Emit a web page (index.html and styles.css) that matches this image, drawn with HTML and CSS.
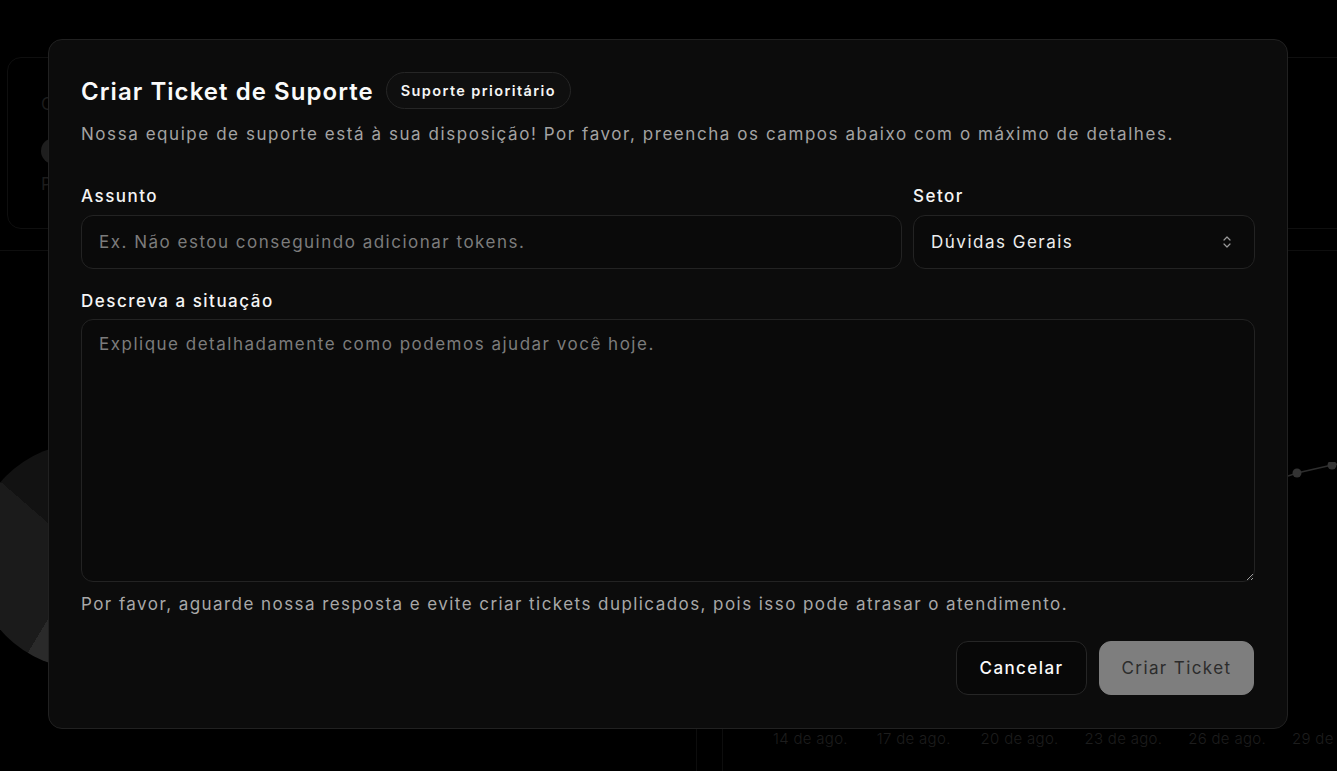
FILE: index.html
```html
<!DOCTYPE html>
<html lang="pt-BR">
<head>
<meta charset="utf-8">
<title>Criar Ticket de Suporte</title>
<link rel="stylesheet" href="styles.css">
</head>
<body>
<div class="dashboard">
  <div class="cards-row">
    <div class="stat-card">
      <div class="stat-title">C</div>
      <div class="stat-avatar"></div>
      <div class="stat-foot">P</div>
    </div>
    <div class="stat-card wide"></div>
  </div>
  <div class="separator"></div>
  <div class="charts-row">
    <div class="pie-card">
      <div class="pie"></div>
    </div>
    <div class="line-card">
      <svg class="line-svg" width="60" height="30" viewBox="0 0 60 30">
        <polyline points="0,14 9,11 44,3 60,0" fill="none" stroke="#2e2e2e" stroke-width="1.5"/>
        <circle cx="9" cy="11" r="4.5" fill="#333"/>
        <circle cx="44" cy="3" r="4.5" fill="#333"/>
      </svg>
      <div class="axis">
        <span>14 de ago.</span><span>17 de ago.</span><span>20 de ago.</span><span>23 de ago.</span><span>26 de ago.</span><span>29 de ago.</span>
      </div>
    </div>
  </div>
</div>

<div class="modal">
  <div class="modal-head">
    <h2 class="modal-title">Criar Ticket de Suporte</h2>
    <span class="badge">Suporte prioritário</span>
  </div>
  <p class="modal-desc">Nossa equipe de suporte está à sua disposição! Por favor, preencha os campos abaixo com o máximo de detalhes.</p>

  <div class="field-row">
    <div class="field grow">
      <label class="label">Assunto</label>
      <input class="control" type="text" placeholder="Ex. Não estou conseguindo adicionar tokens.">
    </div>
    <div class="field sector">
      <label class="label">Setor</label>
      <div class="select-wrap">
        <div class="control select">Dúvidas Gerais</div>
        <svg class="chevrons" width="10" height="14" viewBox="0 0 10 14">
          <path d="M2 5 L5 2 L8 5" fill="none" stroke="#9a9a9a" stroke-width="1.2" stroke-linecap="round" stroke-linejoin="round"/>
          <path d="M2 9 L5 12 L8 9" fill="none" stroke="#9a9a9a" stroke-width="1.2" stroke-linecap="round" stroke-linejoin="round"/>
        </svg>
      </div>
    </div>
  </div>

  <div class="field desc-field">
    <label class="label">Descreva a situação</label>
    <textarea class="control area" placeholder="Explique detalhadamente como podemos ajudar você hoje."></textarea>
  </div>
  <p class="hint">Por favor, aguarde nossa resposta e evite criar tickets duplicados, pois isso pode atrasar o atendimento.</p>

  <div class="actions">
    <button class="btn btn-outline">Cancelar</button>
    <button class="btn btn-primary">Criar Ticket</button>
  </div>
</div>
</body>
</html>
```

FILE: styles.css
```css
* { box-sizing: border-box; }
html, body { margin: 0; padding: 0; }
body {
  width: 1337px;
  height: 771px;
  overflow: hidden;
  background: #000;
  font-family: "Inter", "Noto Sans", sans-serif;
  position: relative;
}

/* dimmed background dashboard */
.dashboard {
  width: 1337px;
  height: 771px;
  padding-top: 57px;
}
.cards-row {
  display: flex;
  gap: 16px;
  padding-left: 7px;
  height: 172px;
}
.stat-card {
  width: 320px;
  height: 172px;
  border: 1px solid #0f0f0f;
  border-radius: 14px;
  padding: 34px 0 0 33px;
  color: #1c1c1c;
}
.stat-card.wide { flex: 1; margin-right: -40px; }
.stat-title { font-size: 17px; line-height: 24px; }
.stat-avatar {
  width: 26px; height: 26px; border-radius: 50%;
  background: #1e1e1e; margin: 22px 0 8px;
}
.stat-foot { font-size: 17px; line-height: 24px; }
.separator {
  height: 1px;
  background: #0e0e0e;
  margin-top: 21px;
}
.charts-row {
  display: flex;
  height: 520px;
}
.pie-card {
  width: 697px;
  border-right: 1px solid #0d0d0d;
  padding: 192px 0 0 0;
  margin-right: 25px;
}
.pie {
  width: 226px;
  height: 226px;
  border-radius: 50%;
  margin-left: -27px;
  background: conic-gradient(#2a2a2a 0deg 35deg, #111 35deg 150deg, #2a2a2a 150deg 211deg, #1b1b1b 211deg 311deg, #121212 311deg 360deg);
}
.line-card {
  flex: 1;
  border-left: 1px solid #0d0d0d;
  position: relative;
  overflow: hidden;
}
.line-svg {
  position: absolute;
  left: 565px;
  top: 211px;
}
.axis {
  position: absolute;
  left: 50px;
  top: 478px;
  display: flex;
  white-space: nowrap;
  font-size: 15px;
  font-weight: 300;
  color: #1d1d1d;
  letter-spacing: 0.3px;
}
.axis span { flex: 0 0 103.8px; }

/* modal */
.modal {
  position: absolute;
  left: 48px;
  top: 39px;
  width: 1240px;
  background: #0c0c0c;
  border: 1px solid #212121;
  border-radius: 14px;
  padding: 32px 32px 33px;
  color: #fff;
  letter-spacing: 1.5px;
}
.modal-head {
  display: flex;
  align-items: center;
  gap: 12px;
  height: 37px;
}
.modal-title {
  margin: 0;
  font-size: 24px;
  font-weight: 600;
  line-height: 32px;
  color: #fafafa;
  letter-spacing: 1.05px;
  position: relative;
  top: 1px;
}
.badge {
  display: inline-flex;
  align-items: center;
  height: 37px;
  padding: 0 14px;
  border: 1px solid #262626;
  border-radius: 999px;
  background: #0f0f0f;
  font-size: 14.5px;
  font-weight: 600;
  color: #f5f5f5;
  letter-spacing: 1.4px;
}
.modal-desc {
  margin: 13px 0 0;
  font-size: 17px;
  line-height: 24px;
  color: #a3a3a3;
  letter-spacing: 1.56px;
}
.field-row {
  display: flex;
  gap: 11px;
  margin-top: 38px;
}
.field { display: flex; flex-direction: column; gap: 7px; }
.field.grow { flex: 1; }
.field.sector { width: 342px; }
.label {
  font-size: 17px;
  line-height: 24px;
  font-weight: 500;
  color: #f5f5f5;
}
.control {
  width: 100%;
  height: 54px;
  background: #0a0a0a;
  border: 1px solid #232323;
  border-radius: 12px;
  padding: 0 17px;
  font-family: inherit;
  font-size: 17px;
  letter-spacing: 1.5px;
  color: #e8e8e8;
  outline: none;
}
.control::placeholder { color: #7c7c7c; }
.select-wrap { position: relative; }
.select {
  display: flex;
  align-items: center;
  color: #ededed;
}
.chevrons {
  position: absolute;
  right: 23px;
  top: 20px;
}
.desc-field { margin-top: 20px; gap: 6px; }
.area {
  height: 263px;
  padding: 12px 17px;
  line-height: 24px;
  resize: vertical;
}
.hint {
  margin: 10px 0 0;
  font-size: 17px;
  line-height: 24px;
  color: #a8a8a8;
  letter-spacing: 1.44px;
}
.actions {
  display: flex;
  justify-content: flex-end;
  gap: 12px;
  margin-top: 25px;
}
.btn {
  height: 54px;
  border-radius: 12px;
  font-family: inherit;
  font-size: 17px;
  letter-spacing: 1.4px;
  padding: 0;
}
.btn-outline {
  width: 131px;
  background: #080808;
  border: 1px solid #262626;
  color: #fafafa;
  font-weight: 500;
}
.btn-primary {
  width: 155px;
  margin-right: 1px;
  background: #7e7e7e;
  border: 1px solid #7e7e7e;
  color: #2c2c2c;
  font-weight: 400;
}
```
